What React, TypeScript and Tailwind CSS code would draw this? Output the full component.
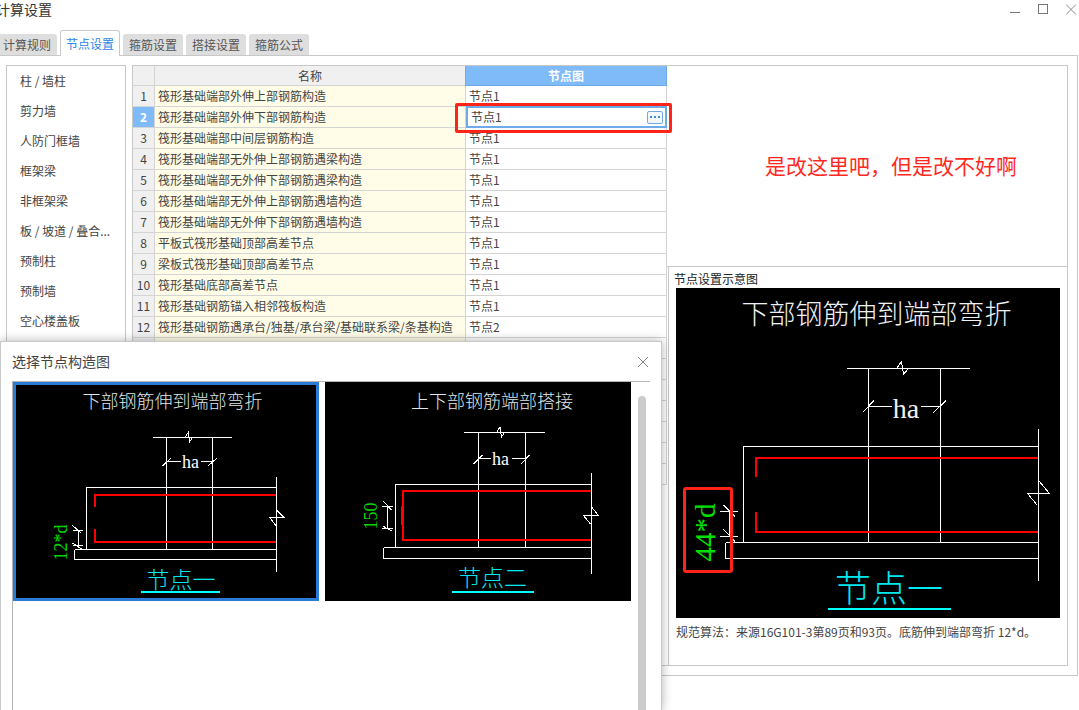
import React from "react";

const tabs = ["计算规则", "节点设置", "箍筋设置", "搭接设置", "箍筋公式"];

const categories = [
  "柱 / 墙柱",
  "剪力墙",
  "人防门框墙",
  "框架梁",
  "非框架梁",
  "板 / 坡道 / 叠合...",
  "预制柱",
  "预制墙",
  "空心楼盖板",
];

const rows = [
  ["筏形基础端部外伸上部钢筋构造", "节点1"],
  ["筏形基础端部外伸下部钢筋构造", "节点1"],
  ["筏形基础端部中间层钢筋构造", "节点1"],
  ["筏形基础端部无外伸上部钢筋遇梁构造", "节点1"],
  ["筏形基础端部无外伸下部钢筋遇梁构造", "节点1"],
  ["筏形基础端部无外伸上部钢筋遇墙构造", "节点1"],
  ["筏形基础端部无外伸下部钢筋遇墙构造", "节点1"],
  ["平板式筏形基础顶部高差节点", "节点1"],
  ["梁板式筏形基础顶部高差节点", "节点1"],
  ["筏形基础底部高差节点", "节点1"],
  ["筏形基础钢筋锚入相邻筏板构造", "节点1"],
  ["筏形基础钢筋遇承台/独基/承台梁/基础联系梁/条基构造", "节点2"],
  ["", ""],
  ["", ""],
  ["", ""],
  ["", ""],
  ["", ""],
  ["", ""],
  ["", ""],
];

const cadCjk = "font-['Noto_Sans_CJK_SC',sans-serif] font-light";
const cadSerif = "font-['Liberation_Serif',serif]";

// all three drawings use page coordinates in their viewBox
function Figure1() {
  return (
    <svg viewBox="16 385 300 213" className="block w-[300px] h-[213px]" shapeRendering="crispEdges">
      <text x="172.5" y="399.5" textAnchor="middle" dominantBaseline="central" className={`${cadCjk} text-[18px] fill-[#dfe6ea]`}>
        下部钢筋伸到端部弯折
      </text>
      <path
        fill="none"
        stroke="#fff"
        d="M153 437.5H232 M185 437.5L188.5 432L189.5 442L192.5 437.5 M166.5 437V549 M212.5 437V549 M166.5 461.5H181 M201 461.5H212.5 M162.5 466L171 458 M208 466L217 458 M86.5 549V487.5H276.5 M74.5 549.5H276.5 M276.5 477V572 M74.5 549.5V559.5H276.5 M269.5 517H283.5L276.5 510 M269.5 517L276 526 M78.5 530V546 M73 530.5H82.5 M73 545.5H82.5 M72.5 525.5L81.5 533.5 M72.5 543L81.5 549"
      />
      <path fill="none" stroke="#ff0000" strokeWidth="2" d="M94.5 507V494.5H276 M94.5 529V541.5H276" />
      <text x="190.5" y="462" textAnchor="middle" dominantBaseline="central" className={`${cadSerif} text-[18px] fill-white`}>
        ha
      </text>
      <text transform="translate(61 542.5) rotate(-90)" textAnchor="middle" dominantBaseline="central" className={`${cadSerif} text-[18px] fill-[#00d800]`}>
        12*d
      </text>
      <text x="181" y="578" textAnchor="middle" dominantBaseline="central" className={`${cadCjk} text-[23px] fill-[#00e8f0]`}>
        节点一
      </text>
      <path fill="none" stroke="#00ffff" strokeWidth="2" d="M141 592H220" />
    </svg>
  );
}

function Figure2() {
  return (
    <svg viewBox="325 382 306 219" className="block w-[306px] h-[219px] bg-black" shapeRendering="crispEdges">
      <text x="492" y="399.5" textAnchor="middle" dominantBaseline="central" className={`${cadCjk} text-[18px] fill-[#dfe6ea]`}>
        上下部钢筋端部搭接
      </text>
      <path
        fill="none"
        stroke="#fff"
        d="M464 432.5H545 M496.5 432.5L500 427L501.5 437L504.5 432.5 M478.5 432V547 M525.5 432V547 M478.5 458.5H491 M512 458.5H525.5 M473.5 464L482.5 455 M521 464L529.5 455 M395.5 547V484.5H591.5 M383.5 547.5H591.5 M591.5 473V574 M383.5 547.5V558.5H591.5 M583.5 515.5H598.5L591.5 507 M583.5 515.5L590.5 524 M387.5 507V528 M382 506.5H392.5 M382 528.5H392.5 M383.5 501.5L391.5 510 M383.5 526.5L391.5 531"
      />
      <path fill="none" stroke="#ff0000" strokeWidth="2" d="M591 491H402.5V540H591 M401.5 506V525" />
      <text x="500.5" y="459" textAnchor="middle" dominantBaseline="central" className={`${cadSerif} text-[18px] fill-white`}>
        ha
      </text>
      <text transform="translate(371 516) rotate(-90)" textAnchor="middle" dominantBaseline="central" className={`${cadSerif} text-[18px] fill-[#00d800]`}>
        150
      </text>
      <text x="492.5" y="576" textAnchor="middle" dominantBaseline="central" className={`${cadCjk} text-[23px] fill-[#00e8f0]`}>
        节点二
      </text>
      <path fill="none" stroke="#00ffff" strokeWidth="2" d="M452 592H534" />
    </svg>
  );
}

function PreviewFigure() {
  return (
    <svg viewBox="676 288 384 330" className="block w-[384px] h-[330px] bg-black" shapeRendering="crispEdges">
      <text x="876.5" y="312" textAnchor="middle" dominantBaseline="central" className={`${cadCjk} text-[27px] fill-[#eef2f5]`}>
        下部钢筋伸到端部弯折
      </text>
      <path
        fill="none"
        stroke="#fff"
        d="M847 368.5H970 M896.5 368.5L901.5 361.5L903.5 374.5L908.5 368.5 M868.5 368V542 M940.5 368V542 M868.5 406.5H891.5 M921 406.5H940.5 M862.5 412.5L874 400.5 M933.5 412.5L946 400.5 M743.5 542V446.5H1038.5 M725.5 542.5H1038.5 M1038.5 429V581 M725.5 542.5V558.5H1038.5 M1027.5 493.5H1049.5L1039 481 M1027.5 493.5L1037.5 505.5 M729.5 512V537 M720 511.5H737.5 M720 536.5H737.5 M723.5 505L735 516.5 M723.5 529.5L735 541.5"
      />
      <path fill="none" stroke="#ff0000" strokeWidth="2" d="M756 477V457.5H1038 M756 512V531.5H1038" />
      <text x="906" y="408" textAnchor="middle" dominantBaseline="central" className={`${cadSerif} text-[28px] fill-[#f0f0f0]`}>
        ha
      </text>
      <text transform="translate(704.5 532.5) rotate(-90)" textAnchor="middle" dominantBaseline="central" className={`${cadSerif} text-[29px] fill-[#00e000]`}>
        44*d
      </text>
      <text x="889" y="586" textAnchor="middle" dominantBaseline="central" className={`${cadCjk} text-[36px] fill-[#00e8f0]`}>
        节点一
      </text>
      <path fill="none" stroke="#00ffff" strokeWidth="2" d="M828 608.5H951" />
    </svg>
  );
}

function TitleBar() {
  return (
    <div className="h-[30px] flex items-start justify-between">
      <span className="-ml-[4px] text-[14px] leading-[18px] text-[#333]">计算设置</span>
      <div className="flex items-start">
        <svg width="12" height="16" className="mt-[2px] mr-[16px]" shapeRendering="crispEdges">
          <path d="M0 10.5H10" stroke="#777" fill="none" />
        </svg>
        <svg width="12" height="16" className="mt-[2px] mr-[16px]" shapeRendering="crispEdges">
          <rect x="0.5" y="2.5" width="9" height="9" stroke="#777" fill="none" />
        </svg>
        <svg width="13" height="16" className="mt-[2px]" viewBox="0 0 13 16">
          <path d="M0 2.5L10 12.5M10 2.5L0 12.5" stroke="#888" fill="none" />
        </svg>
      </div>
    </div>
  );
}

function TabStrip() {
  return (
    <div className="h-[26px] flex items-end gap-[3px] -ml-[3px] relative z-10 -mb-px">
      {tabs.map((t, i) =>
        i === 1 ? (
          <div
            key={t}
            className="w-[60px] h-[26px] bg-white border border-b-0 border-[#cacaca] rounded-t-[3px] flex items-center justify-center text-[12px] text-[#2b87e6]"
          >
            {t}
          </div>
        ) : (
          <div
            key={t}
            className="w-[60px] h-[21px] mb-px bg-[#dedede] rounded-t-[3px] flex items-center justify-center text-[12px] text-[#555]"
          >
            {t}
          </div>
        )
      )}
    </div>
  );
}

function CategoryList() {
  return (
    <div className="w-[120px] h-[601px] border border-[#c8c8c8] shrink-0">
      {categories.map((c) => (
        <div key={c} className="h-[30px] flex items-center pl-[13px] text-[12px] text-[#444] whitespace-nowrap">
          {c}
        </div>
      ))}
    </div>
  );
}

function NodeTable() {
  return (
    <div className="w-[534px] shrink-0 text-[12px] text-[#444]">
      <div className="grid grid-cols-[22px_311px_201px] h-[20px] leading-[19px]">
        <div className="bg-[#f0f0f0] border-r border-b border-[#d4d4d4]" />
        <div className="bg-[#f0f0f0] border-r border-b border-[#d4d4d4] text-center">名称</div>
        <div className="bg-[#80bbf9] border border-t-0 border-[#6eaae8] -ml-px text-center text-white font-bold">节点图</div>
      </div>
      {rows.map(([name, node], i) => (
        <div key={i} className="grid grid-cols-[22px_311px_201px] h-[21px] leading-[20px]">
          <div
            className={
              i === 1
                ? "bg-[#80bbf9] border-r border-b border-[#d4d4d4] text-center text-white font-bold"
                : "bg-[#f0f0f0] border-r border-b border-[#d4d4d4] text-center"
            }
          >
            {i < 12 ? i + 1 : ""}
          </div>
          <div className="bg-[#fffde8] border-r border-b border-[#d4d4d4] pl-[3px] whitespace-nowrap overflow-hidden">{name}</div>
          {i === 1 ? (
            <div className="border-2 border-[#6eaae8] flex items-center justify-between pl-[3px] pr-[2px] -mt-px h-[22px] bg-white">
              <span>{node}</span>
              <span className="w-[16px] h-[13px] border border-[#6eaae8] rounded-[2px] bg-[#f3f8fe] flex items-center justify-center gap-[2px]">
                <i className="w-[2px] h-[2px] bg-[#3c8ce6]" />
                <i className="w-[2px] h-[2px] bg-[#3c8ce6]" />
                <i className="w-[2px] h-[2px] bg-[#3c8ce6]" />
              </span>
            </div>
          ) : (
            <div className="border-r border-b border-[#d4d4d4] pl-[3px] bg-white">{node}</div>
          )}
        </div>
      ))}
    </div>
  );
}

function PreviewPane() {
  return (
    <div className="flex-1 flex flex-col min-w-0">
      <div className="h-[201px] border-b border-[#c8c8c8]" />
      <div className="flex-1 ml-px border-l border-[#c8c8c8] pl-[7px]">
        <div className="h-[21px] leading-[24px] -ml-[2px] text-[12px] text-[#222]">节点设置示意图</div>
        <PreviewFigure />
        <div className="mt-[5px] text-[12px] leading-[18px] text-[#444] whitespace-nowrap">
          规范算法：来源16G101-3第89页和93页。底筋伸到端部弯折 12*d。
        </div>
      </div>
    </div>
  );
}

function NodePicker() {
  return (
    <div className="absolute left-0 top-[341px] w-[662px] h-[369px] bg-white border border-b-0 border-[#c8c8c8] shadow-[0_0_10px_rgba(0,0,0,0.3)] z-20">
      <div className="h-[39px] flex items-center justify-between pl-[11px] pr-[12px]">
        <span className="text-[14px] text-[#444]">选择节点构造图</span>
        <svg width="12" height="12" viewBox="0 0 12 12">
          <path d="M1 1L11 11M11 1L1 11" stroke="#888" fill="none" />
        </svg>
      </div>
      <div className="ml-[11px] w-[638px] h-[329px] border-t border-l border-[#b4b4b4] flex">
        <div className="w-[306px] h-[219px] border-[3px] border-[#2a7ad6] bg-black shrink-0">
          <Figure1 />
        </div>
        <div className="ml-[6px] shrink-0">
          <Figure2 />
        </div>
        <div className="ml-[7px] mt-[14px] w-[8px] bg-[#cbcbcb] rounded-t-[4px]" />
      </div>
    </div>
  );
}

export default function App() {
  return (
    <div className="relative w-[1079px] h-[710px] overflow-hidden bg-white font-['Noto_Sans_CJK_SC','Noto_Sans',sans-serif]">
      <TitleBar />
      <TabStrip />
      <div className="mr-px h-[621px] border-t border-r border-b border-[#c8c8c8] pt-[9px] pl-[6px] pr-[9px] flex gap-[6px]">
        <CategoryList />
        <div className="flex-1 h-[601px] border border-[#c8c8c8] flex min-w-0">
          <NodeTable />
          <PreviewPane />
        </div>
      </div>
      <NodePicker />
      {/* hand-drawn red marks on top of the screenshot */}
      <div className="absolute left-[455px] top-[103px] w-[217px] h-[30px] border-[3px] border-[#ff2318] rounded-[2px] z-10" />
      <div className="absolute left-[683px] top-[487px] w-[50px] h-[86px] border-[3px] border-[#ff2318] rounded-[3px] z-10" />
      <div className="absolute left-[765px] top-[151px] text-[21px] leading-[28px] text-[#ff2a1f] whitespace-nowrap z-10">
        是改这里吧，但是改不好啊
      </div>
    </div>
  );
}
